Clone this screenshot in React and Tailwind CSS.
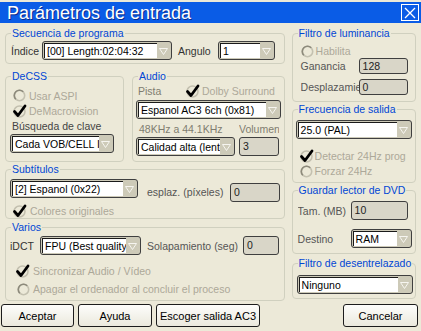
import React from "react";

const Arrow = () => (
  <svg width="9" height="8" viewBox="0 0 9 8">
    <path d="M0.5 1.5 H8.5 L4.5 7.5 Z" fill="none" stroke="#f6f5f0" strokeWidth="1" />
  </svg>
);

const Combo = ({ value, className = "" }) => (
  <div className={"flex h-[19px] shrink-0 rounded-[3px] border border-[#3f3f3f] bg-[#cdcab8] p-[1px] " + className}>
    <div className="min-w-0 flex-1 overflow-hidden whitespace-nowrap border-l border-t border-[#1a1a1a] bg-white pl-[2px] leading-[15px] text-black">
      {value}
    </div>
    <div className="flex w-[13px] shrink-0 items-center justify-center">
      <Arrow />
    </div>
  </div>
);

const Field = ({ value, className = "" }) => (
  <div className={"shrink-0 rounded-[3px] border border-[#3f3f3f] bg-[#d9d6c8] pl-[3px] text-[#222] " + className}>
    {value}
  </div>
);

const Check = () => (
  <svg width="15" height="14" viewBox="0 0 15 14" className="shrink-0">
    <circle cx="7.5" cy="7.5" r="5.5" fill="none" stroke="#c2bfae" strokeWidth="1.5" />
    <path d="M2.5 7.5 L6 11.5 L13 2" fill="none" stroke="#000" strokeWidth="2.8" strokeLinecap="round" strokeLinejoin="round" />
  </svg>
);

const Radio = () => (
  <svg width="13" height="13" viewBox="0 0 13 13" className="shrink-0">
    <circle cx="6.5" cy="6.5" r="5.2" fill="#ece9d8" stroke="#c4c1b0" strokeWidth="1.6" />
    <path d="M2.8 10.2 A5.2 5.2 0 0 1 10.2 2.8" fill="none" stroke="#8d8a7b" strokeWidth="1.6" />
  </svg>
);

const Group = ({ title, className = "", children }) => (
  <fieldset className={"min-w-0 rounded-[4px] border border-[#d0d0bf] " + className}>
    <legend className="ml-[5px] whitespace-nowrap px-[1px] leading-[14px] text-[#0046d5]">{title}</legend>
    {children}
  </fieldset>
);

const Button = ({ children, className = "" }) => (
  <button className={"h-[23px] whitespace-nowrap rounded-[3px] border border-[#1c1c1c] bg-linear-to-b from-[#fdfdfb] to-[#ebe9dd] text-[11px] text-black " + className}>
    {children}
  </button>
);

export default function App() {
  return (
    <div className="flex h-[331px] w-[421px] flex-col overflow-hidden bg-[#ece9d8] font-['Liberation_Sans',sans-serif] text-[10.5px] leading-[14px]">
      {/* title bar */}
      <div className="mt-[2px] flex h-[21px] shrink-0 items-center bg-[#0a5ce6] pl-[7px] pr-[2px]">
        <span className="text-[18px] leading-[20px] text-white [text-shadow:1px_1px_#0b2a8a]">
          Parámetros de entrada
        </span>
        <div className="ml-auto flex h-[17px] w-[18px] items-center justify-center border border-white">
          <svg width="12" height="12" viewBox="0 0 12 12">
            <path d="M1 1 L11 11 M11 1 L1 11" stroke="#fff" strokeWidth="1.3" />
          </svg>
        </div>
      </div>

      <div className="mt-[3px] flex gap-[7px] px-[5px]">
        {/* left column */}
        <div className="flex w-[281px] flex-col">
          <Group title="Secuencia de programa" className="h-[38px]">
            <div className="flex items-center pl-[5px] pt-[1px]">
              <span className="w-[31px] text-[#333]">Índice</span>
              <Combo value="[00] Length:02:04:32" className="w-[130px]" />
              <span className="ml-[6px] w-[40px] text-[#333]">Angulo</span>
              <Combo value="1" className="w-[57px]" />
            </div>
          </Group>

          <div className="mt-[5px] flex gap-[8px]">
            <Group title="DeCSS" className="h-[93px] w-[119px]">
              <div className="pl-[6px] pt-[5px]">
                <div className="flex h-[15px] items-center text-[#aca899]">
                  <span className="flex w-[17px] pl-[1px]"><Radio /></span>
                  Usar ASPI
                </div>
                <div className="flex h-[15px] items-center text-[#aca899]">
                  <span className="flex w-[17px]"><Check /></span>
                  DeMacrovision
                </div>
                <div className="flex h-[15px] items-center text-[#444]">Búsqueda de clave</div>
                <Combo value="Cada VOB/CELL I" className="-ml-[2px] mt-[1px] w-[104px]" />
              </div>
            </Group>

            <Group title="Audio" className="h-[93px] flex-1">
              <div className="pl-[3px] pt-[1px]">
                <div className="flex h-[14px] items-center text-[#7f7d70]">
                  <span className="ml-[2px] w-[47px]">Pista</span>
                  <Check />
                  <span className="ml-[2px] whitespace-nowrap text-[#aca899]">Dolby Surround</span>
                </div>
                <Combo value="Espanol AC3 6ch (0x81)" className="mt-[2px] w-[145px]" />
                <div className="mt-[3px] flex h-[14px] text-[#7f7d70]">
                  <span className="ml-[3px] w-[100px] whitespace-nowrap">48KHz a 44.1KHz</span>
                  <span className="w-[40px] overflow-hidden whitespace-nowrap">Volumen</span>
                </div>
                <div className="mt-[1px] flex gap-[4px]">
                  <Combo value="Calidad alta (lento)" className="w-[99px]" />
                  <Field value="3" className="h-[19px] w-[40px] leading-[17px]" />
                </div>
              </div>
            </Group>
          </div>

          <Group title="Subtítulos" className="h-[57px]">
            <div className="flex h-[26px] pl-[4px]">
              <Combo value="[2] Espanol (0x22)" className="mt-[3px] w-[128px]" />
              <span className="ml-[9px] mt-[9px] w-[83px] whitespace-nowrap text-[#555]">esplaz. (píxeles)</span>
              <Field value="0" className="mt-[7px] h-[19px] w-[50px] leading-[17px]" />
            </div>
            <div className="mt-[2px] flex h-[14px] items-center pl-[6px] text-[#aca899]">
              <span className="flex w-[18px]"><Check /></span>
              Colores originales
            </div>
          </Group>

          <Group title="Varios" className="mt-[1px] h-[81px]">
            <div className="mt-[2px] flex h-[19px] items-center pl-[4px]">
              <span className="w-[30px] text-[#333]">iDCT</span>
              <Combo value="FPU (Best quality, slow)" className="w-[101px]" />
              <span className="ml-[6px] w-[96px] whitespace-nowrap text-[#555]">Solapamiento (seg)</span>
              <Field value="0" className="h-[19px] w-[36px] leading-[17px]" />
            </div>
            <div className="mt-[9px] flex h-[14px] items-center pl-[9px] text-[#aca899]">
              <span className="flex w-[18px]"><Check /></span>
              Sincronizar Audio / Vídeo
            </div>
            <div className="mt-[4px] flex h-[14px] items-center pl-[11px] text-[#aca899]">
              <span className="flex w-[16px]"><Radio /></span>
              Apagar el ordenador al concluir el proceso
            </div>
          </Group>
        </div>

        {/* right column */}
        <div className="flex w-[125px] flex-col">
          <Group title="Filtro de luminancia" className="h-[76px]">
            <div className="pl-[8px] pt-[4px]">
              <div className="flex h-[14px] items-center text-[#aca899]">
                <span className="flex w-[15px]"><Radio /></span>
                Habilita
              </div>
              <div className="flex h-[16px] items-center">
                <span className="w-[58px] text-[#555]">Ganancia</span>
                <Field value="128" className="h-[16px] w-[49px] leading-[14px]" />
              </div>
              <div className="mt-[5px] flex h-[16px] items-center">
                <span className="w-[58px] overflow-hidden whitespace-nowrap pr-[2px] text-[#555]">Desplazamiento</span>
                <Field value="0" className="h-[16px] w-[49px] leading-[14px]" />
              </div>
            </div>
          </Group>

          <Group title="Frecuencia de salida" className="h-[81px]">
            <div className="pl-[3px] pt-[4px]">
              <Combo value="25.0  (PAL)" className="w-[116px]" />
              <div className="mt-[10px] flex h-[14px] items-center pl-[3px] text-[#aca899]">
                <span className="flex w-[16px]"><Check /></span>
                <span className="w-[91px] overflow-hidden whitespace-nowrap">Detectar 24Hz progresivo</span>
              </div>
              <div className="mt-[1px] flex h-[14px] items-center pl-[4px] text-[#aca899]">
                <span className="flex w-[15px]"><Radio /></span>
                Forzar 24Hz
              </div>
            </div>
          </Group>

          <Group title="Guardar lector de DVD" className="h-[71px]">
            <div className="pl-[5px] pt-[4px]">
              <div className="flex h-[19px] items-center">
                <span className="w-[53px] overflow-hidden whitespace-nowrap text-[#555]">Tam. (MB)</span>
                <Field value="10" className="h-[19px] w-[57px] leading-[17px]" />
              </div>
              <div className="mt-[9px] flex h-[19px] items-center">
                <span className="w-[53px] text-[#555]">Destino</span>
                <Combo value="RAM" className="w-[61px]" />
              </div>
            </div>
          </Group>

          <Group title="Filtro de desentrelazado" className="mt-[2px] h-[43px]">
            <div className="pl-[4px] pt-[5px]">
              <Combo value="Ninguno" className="w-[116px]" />
            </div>
          </Group>
        </div>
      </div>

      <div className="mt-[3px] flex gap-[4px] pl-[1px] pr-[3px]">
        <Button className="w-[73px]">Aceptar</Button>
        <Button className="w-[74px]">Ayuda</Button>
        <Button className="w-[104px]">Escoger salida AC3</Button>
        <Button className="ml-auto w-[75px]">Cancelar</Button>
      </div>
    </div>
  );
}
